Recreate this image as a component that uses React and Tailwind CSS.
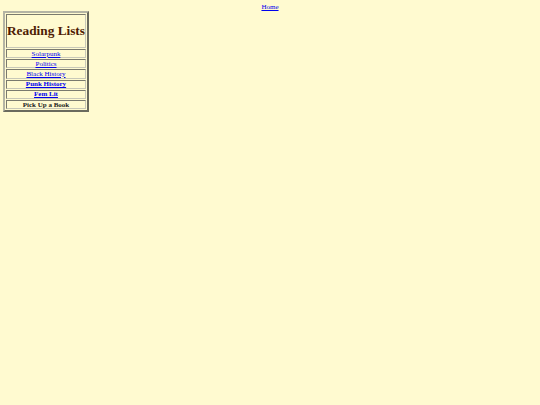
const lists = [
  { label: "Solarpunk", bold: false },
  { label: "Politics", bold: false },
  { label: "Black History", bold: false },
  { label: "Punk History", bold: true },
  { label: "Fem Lit", bold: true },
];

export default function App() {
  return (
    <div
      className="min-h-[405px] bg-[#fffad0] text-[7px] leading-[8px] text-black"
      style={{ fontFamily: '"Liberation Serif", "Times New Roman", serif' }}
    >
      <div className="pt-[3px] text-center">
        <a href="#" className="text-[#0000ee] underline">Home</a>
      </div>

      <div className="ml-[3px] w-[86px] border-2 border-t-[#b4b4a4] border-l-[#b4b4a4] border-r-[#6a6a5e] border-b-[#6a6a5e] p-[1px]">
        <div className="flex flex-col gap-[1px]">
          <div className="flex h-[34px] items-center justify-center border border-t-[#7a7a6e] border-l-[#7a7a6e] border-r-[#c8c8b8] border-b-[#c8c8b8]">
            <h1 className="whitespace-nowrap text-[13.3px] font-bold leading-none text-[#4e1c04]">Reading Lists</h1>
          </div>
          {lists.map((item) => (
            <div
              key={item.label}
              className="flex h-[9.2px] items-center justify-center border border-t-[#7a7a6e] border-l-[#7a7a6e] border-r-[#c8c8b8] border-b-[#c8c8b8]"
            >
              <a href="#" className={`whitespace-nowrap text-[#0000ee] underline ${item.bold ? "font-bold" : ""}`}>
                {item.label}
              </a>
            </div>
          ))}
          <div className="flex h-[9.2px] items-center justify-center border border-t-[#7a7a6e] border-l-[#7a7a6e] border-r-[#c8c8b8] border-b-[#c8c8b8]">
            <span className="whitespace-nowrap font-bold text-[#1a1a1a]">Pick Up a Book</span>
          </div>
        </div>
      </div>
    </div>
  );
}
